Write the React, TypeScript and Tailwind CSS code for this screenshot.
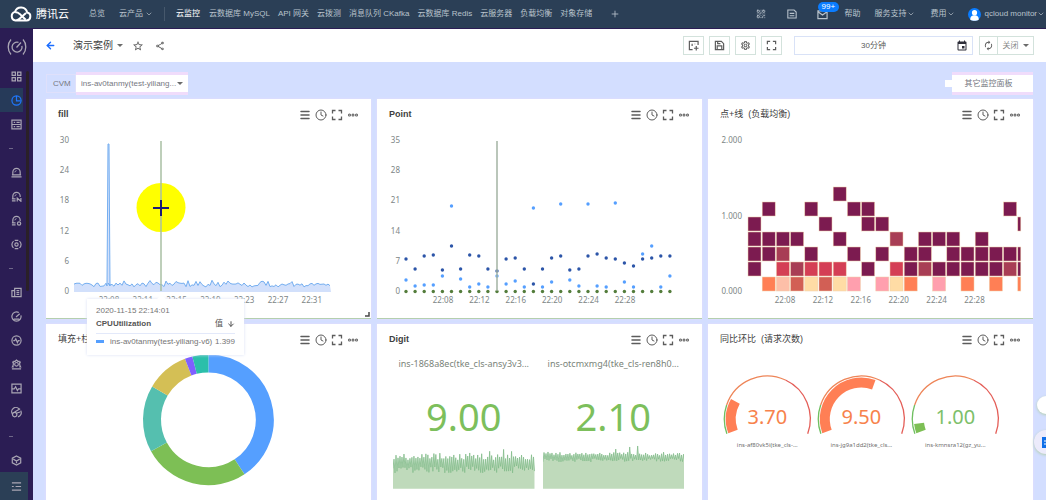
import type { ReactNode } from "react";
import { ArrowDown, ArrowLeft, ChevronDown, Clock, Ellipsis, Menu, Plus, QrCode } from "lucide-react";
import { MdAutorenew, MdEvent, MdOutlineSettings, MdOutlineShare, MdStarOutline } from "react-icons/md";

const AXIS = "fill-[#7d8686] text-[8px] font-['Noto_Sans',sans-serif]";

const NAV = [
  "云数据库 MySQL",
  "API 网关",
  "云拨测",
  "消息队列 CKafka",
  "云数据库 Redis",
  "云服务器",
  "负载均衡",
  "对象存储",
];

/* ---------- helpers ---------- */

function noise(i: number) {
  const v = Math.sin(i * 12.9898 + 4.1) * 43758.5453;
  return v - Math.floor(v);
}

function polar(cx: number, cy: number, r: number, deg: number) {
  const a = ((deg - 90) * Math.PI) / 180;
  return `${(cx + r * Math.cos(a)).toFixed(2)} ${(cy + r * Math.sin(a)).toFixed(2)}`;
}

function arc(cx: number, cy: number, r: number, from: number, to: number) {
  const large = to - from > 180 ? 1 : 0;
  return `M${polar(cx, cy, r, from)}A${r} ${r} 0 ${large} 1 ${polar(cx, cy, r, to)}`;
}

function Glyph({ children, className = "size-[11px]" }: { children: ReactNode; className?: string }) {
  return (
    <svg viewBox="0 0 12 12" className={className} fill="none" stroke="currentColor" strokeWidth="1.300">
      {children}
    </svg>
  );
}

function Expand({ className }: { className: string }) {
  return (
    <Glyph className={className}>
      <path d="M1.500 4.500v-3h3M7.500 1.500h3v3M10.500 7.500v3h-3M4.500 10.500h-3v-3" />
    </Glyph>
  );
}

/* ---------- header ---------- */

function CloudLogo() {
  return (
    <svg viewBox="0 0 22 16" className="h-4 w-[22px]" fill="none" stroke="white" strokeWidth="2" strokeLinejoin="round">
      <path d="M6 14.500h10.500a4 4 0 0 0 .7-7.900A6.300 6.300 0 0 0 5 5.900a4.400 4.400 0 0 0 .5 8.600c1.600 0 2.700-.5 4-1.700L16 7" />
      <path d="M5.200 6.300c1.800-.2 3.200.5 4.500 1.600l6 5.900" />
    </svg>
  );
}

function Header() {
  return (
    <header className="flex h-[29px] shrink-0 items-center border-b border-[#2b1d54] bg-[#2b3f56] text-[8px] whitespace-nowrap text-[#b9c3cc]">
      <a href="#" className="ml-[10px] flex items-center gap-1 text-[11px] text-white">
        <CloudLogo />
        腾讯云
      </a>
      <nav className="ml-5 flex items-center">
        <a href="#">总览</a>
        <button className="ml-[14px] flex items-center">
          云产品
          <ChevronDown className="ml-[2px] size-2" />
        </button>
        <span className="mx-[11px] h-[14px] w-px bg-[#46586c]" />
        <div className="flex items-center gap-2">
          <a href="#" className="pr-px text-white">云监控</a>
          {NAV.map((item) => (
            <a href="#" key={item}>{item}</a>
          ))}
        </div>
        <button aria-label="添加" className="ml-[18px]">
          <Plus className="size-[10px]" />
        </button>
      </nav>
      <div className="mr-px ml-auto flex items-center">
        <button aria-label="二维码"><QrCode className="size-[10px]" /></button>
        <button aria-label="文档" className="ml-[21px]">
          <Glyph className="size-[10px]">
            <path d="M1 1.200h7.500l2.500 2.500v7.100H1zM3.200 5.200h5.600M3.200 8h5.600" />
          </Glyph>
        </button>
        <button aria-label="消息" className="relative ml-5">
          <Glyph>
            <path d="M1 2h10v8.500H1zM1 3l5 3.500L11 3" />
          </Glyph>
          <span className="absolute -top-[7px] left-px rounded-full bg-[#0a7cff] px-1 text-[8px] leading-[10px] text-white">99+</span>
        </button>
        <a href="#" className="ml-[17px]">帮助</a>
        <button className="ml-[14px] flex items-center">服务支持<ChevronDown className="size-2" /></button>
        <button className="ml-4 flex items-center">费用<ChevronDown className="size-2" /></button>
        <button className="ml-[13px] flex items-center">
          <svg viewBox="0 0 12 12" className="mr-1 size-[13px]">
            <circle cx="6" cy="6" r="6" fill="#0a7cff" />
            <circle cx="6" cy="4.300" r="2.400" fill="white" />
            <path d="M2 10.500c.2-2.600 1.500-3.700 4-3.700s3.800 1.100 4 3.700c-2 1.800-6 1.800-8 0z" fill="white" />
          </svg>
          qcloud monitor
          <ChevronDown className="size-2" />
        </button>
      </div>
    </header>
  );
}

/* ---------- sidebar ---------- */

function AlarmIcon({ mark }: { mark?: ReactNode }) {
  return (
    <Glyph>
      <path d={mark ? "M1 10.800h4M1 8.600h4M2 8.500V5.500a4 4 0 0 1 8 0v1" : "M.5 10.800h11M2 8.500V5.500a4 4 0 0 1 8 0v3M1 8.600h10"} />
      <path d="M4.200 5.800A2 2 0 0 1 6 4" strokeWidth="1" />
      {mark}
    </Glyph>
  );
}

const SIDE: { label: string; icon: ReactNode }[] = [
  {
    label: "监控概览",
    icon: (
      <Glyph>
        <path d="M1.200 1.200h3.600v3.600H1.200zM7.200 1.200h3.600v3.600H7.200zM1.200 7.200h3.600v3.600H1.200zM7.200 7.200h3.600v3.600H7.200z" />
      </Glyph>
    ),
  },
  {
    label: "Dashboard",
    icon: (
      <Glyph>
        <circle cx="6" cy="6" r="5" />
        <path d="M6 1v5.500h4.500" />
      </Glyph>
    ),
  },
  {
    label: "实例分组",
    icon: (
      <Glyph>
        <path d="M1 1.200h10v9.600H1zM1 6h10M3 3.600h1.500M6 3.600h3.500M3 8.400h1.500M6 8.400h3.500" />
      </Glyph>
    ),
  },
  { label: "", icon: null },
  { label: "告警历史", icon: <AlarmIcon /> },
  { label: "告警通知", icon: <AlarmIcon mark={<path d="M6.800 11.500V7.800l4 3.400V7.500" />} /> },
  { label: "告警配置", icon: <AlarmIcon mark={<circle cx="8.800" cy="9.300" r="1.800" />} /> },
  {
    label: "事件中心",
    icon: (
      <Glyph>
        <circle cx="6" cy="6" r="1.800" />
        <path d="M4 1.500h4M4 10.500h4M2.800 2.300A5 5 0 0 0 1 6a5 5 0 0 0 1.800 3.700M9.200 2.300A5 5 0 0 1 11 6a5 5 0 0 1-1.800 3.700" />
      </Glyph>
    ),
  },
  { label: "", icon: null },
  {
    label: "云产品监控",
    icon: (
      <Glyph>
        <path d="M4 1.500h7v9H4zM4 4H1v6.500h3M6 4h3M6 6h3M6 8h3" />
      </Glyph>
    ),
  },
  {
    label: "流量监控",
    icon: (
      <Glyph>
        <path d="M8.500 1.700a5 5 0 1 0 2.300 3M5.500 6.500l4-3.500M3 8.800h6" />
      </Glyph>
    ),
  },
  {
    label: "应用监控",
    icon: (
      <Glyph>
        <circle cx="6" cy="6" r="5" />
        <path d="M2.500 6.200h1.500l1.200-2 1.800 4 1-2h1.500" />
      </Glyph>
    ),
  },
  {
    label: "告警服务",
    icon: (
      <Glyph>
        <path d="M1 10.800h10M3 8.500H1.500L2.500 6.500v-3H1.200M9 8.500h1.500l-1-2v-3h1.300M2.500 2.500h2L6 1.200l1.500 1.300h2" />
        <circle cx="6" cy="5.800" r="2" />
      </Glyph>
    ),
  },
  {
    label: "自定义监控",
    icon: (
      <Glyph>
        <path d="M1 1.200h10v9.600H1zM1 6.500h2.500L5 4l2 4.200 1.200-1.700H11" />
      </Glyph>
    ),
  },
  {
    label: "前端监控",
    icon: (
      <Glyph>
        <path d="M1.500 7.500A4.500 4.500 0 0 1 9 2.500M4 5.500l6-3.500M10.500 4a4.500 4.500 0 0 1-3 6.800" />
        <circle cx="4" cy="8.300" r="2.400" />
        <path d="M6.500 6.500l3.500-1" />
      </Glyph>
    ),
  },
  { label: "", icon: null },
  {
    label: "资源包",
    icon: (
      <Glyph>
        <path d="M6 1l4.600 2.400v5.200L6 11 1.400 8.600V3.400zM2.500 4.500L6 6.500l3.500-2M6 6.500V9" />
      </Glyph>
    ),
  },
];

function Sidebar() {
  return (
    <aside className="relative flex w-[33px] shrink-0 flex-col bg-[#2b1d54] text-[#aaa6b4]">
      <div className="flex h-[35px] items-center justify-center">
        <svg viewBox="0 0 20 18" className="h-[18px] w-5" fill="none" stroke="currentColor" strokeWidth="1.300">
          <path d="M4 1.500C.3 5.500.3 12.500 4 16.500M16 1.500c3.700 4 3.700 11 0 15" />
          <path d="M11.500 4.300a5 5 0 1 0 3.400 3.500M9.500 9.500l4.500-5" />
        </svg>
      </div>
      {SIDE.map((item, i) =>
        item.icon ? (
          <button
            key={i}
            aria-label={item.label}
            className={`flex h-6 items-center pl-[11px] ${i === 1 ? "w-[23px] bg-[#263a59] text-[#1f78ff]" : "w-full"}`}
          >
            <span className="shrink-0">{item.icon}</span>
          </button>
        ) : (
          <div key={i} className="flex h-6 items-center pl-[9px]">
            <span className="h-px w-1 bg-[#6f6889]" />
          </div>
        )
      )}
      <span className="absolute top-[42px] left-[26px] h-[220px] w-[3px] rounded-full bg-[#2a2028]" />
      <button aria-label="收起" className="mt-auto flex h-7 w-[28px] items-center bg-[#2b3f56] pl-[11px]">
        <Glyph>
          <path d="M1 2h10M5 6h6M1 10h10M1 6h2" />
        </Glyph>
      </button>
    </aside>
  );
}

/* ---------- toolbar ---------- */

function ToolButton({ label, children }: { label: string; children: ReactNode }) {
  return (
    <button aria-label={label} className="flex h-[19px] w-[21px] items-center justify-center border border-[#d3e2dc]">
      {children}
    </button>
  );
}

function Caret() {
  return <span className="border-x-[3px] border-t-[3px] border-x-transparent border-t-[#6b6b6b]" />;
}

function Toolbar() {
  return (
    <div className="flex h-[33px] shrink-0 items-center bg-white px-3 text-[#5c5c5c]">
      <button aria-label="返回"><ArrowLeft className="size-[11px] text-[#1a6dff]" strokeWidth={3} /></button>
      <button className="ml-[17px] flex items-center gap-1 text-[10px] text-[#3f3f3f]">
        演示案例
        <Caret />
      </button>
      <button aria-label="收藏" className="ml-[9px]"><MdStarOutline className="size-3" /></button>
      <button aria-label="分享" className="ml-[11px]"><MdOutlineShare className="size-[10px]" /></button>
      <div className="ml-auto flex items-center gap-[5px]">
        <ToolButton label="新建图表">
          <Glyph>
            <path d="M11 5.500v-4H1.500v9H5M4.500 4v2.500M7.500 4v.5M9 6.500v5M6.500 9h5" />
          </Glyph>
        </ToolButton>
        <ToolButton label="保存">
          <Glyph>
            <path d="M1.500 1.500h6.500l2.500 2.500v6.500h-9zM4 1.500V4h3M3.500 10.500v-4h5v4" />
          </Glyph>
        </ToolButton>
        <ToolButton label="设置"><MdOutlineSettings className="size-[11px]" /></ToolButton>
        <ToolButton label="全屏"><Expand className="size-[11px]" /></ToolButton>
      </div>
      <button className="ml-3 flex h-[19px] w-[179px] items-center border border-[#d9e2f7] pr-1 text-[8px]">
        <span className="flex-1 pr-1">30分钟</span>
        <MdEvent className="size-3 text-[#2f2f3a]" />
      </button>
      <div className="ml-[6px] flex h-[19px] items-stretch border border-[#d3e2dc] text-[8px] text-[#8a8a8a]">
        <button aria-label="刷新" className="flex w-[18px] items-center justify-center border-r border-[#d3e2dc]">
          <MdAutorenew className="size-[11px] text-[#5c5c5c]" />
        </button>
        <button className="flex w-[35px] items-center justify-center gap-1">
          关闭
          <Caret />
        </button>
      </div>
    </div>
  );
}

function FilterBar() {
  return (
    <div className="flex h-[23px] items-center text-[8px] text-[#76787f]">
      <label htmlFor="cvm" className="flex h-[19px] w-[30px] items-center border border-[#dfe0fb] pl-[6px]">CVM</label>
      <div className="relative flex h-[23px] items-center border-y-[3px] border-[#f0dcfb] bg-white">
        <select id="cvm" className="h-[17px] w-[112px] appearance-none bg-white pl-[5px] outline-none">
          <option>ins-av0tanmy(test-yiliang...</option>
        </select>
        <span className="pointer-events-none absolute right-[5px] flex"><Caret /></span>
      </div>
      <span className="ml-auto size-[7px] bg-white" />
      <button className="h-[23px] w-[81px] border-y-[3px] border-[#f0dcfb] bg-white pr-2">其它监控面板</button>
    </div>
  );
}

/* ---------- cards ---------- */

function Card({ title, bold, children }: { title: string; bold?: boolean; children: ReactNode }) {
  return (
    <section className="relative border-b border-[#b4cfae] bg-white shadow-[0_0_2px_#e9defb]">
      <div className="flex h-[29px] items-center pt-[2px] pr-3 pl-3">
        <h2 className={`text-[9px] whitespace-pre text-[#3f3f3f] ${bold ? "font-bold" : "font-normal"}`}>{title}</h2>
        <div className="ml-auto flex items-center gap-1 text-[#5c5c5c]">
          <button aria-label="图例"><Menu className="size-3" strokeWidth={3} /></button>
          <button aria-label="时间"><Clock className="size-3" strokeWidth={2} /></button>
          <button aria-label="全屏"><Expand className="size-3" /></button>
          <button aria-label="更多"><Ellipsis className="size-3" strokeWidth={4} /></button>
        </div>
      </div>
      {children}
    </section>
  );
}

function YAxis({ labels, x, step }: { labels: string[]; x: number; step: number }) {
  return (
    <>
      {labels.map((label, i) => (
        <text key={label} x={x} y={15 + i * step} textAnchor="end" className={AXIS}>{label}</text>
      ))}
    </>
  );
}

function XAxis({ labels, x, step }: { labels: string[]; x: number; step: number }) {
  return (
    <>
      {labels.map((label, i) => (
        <text key={label} x={x + i * step} y="175" textAnchor="middle" className={AXIS}>{label}</text>
      ))}
    </>
  );
}

function FillChart() {
  const pts: string[] = [];
  for (let i = 0; i <= 128; i++) {
    const peak = noise(i) > 0.78 ? 3 : 0;
    pts.push(`${28 + i * 2},${(159 - noise(i + 40) * 4 - peak).toFixed(1)}`);
    if (i === 16) pts.push("61,158", "62,16", "63,16", "64,158");
  }
  const line = pts.join(" ");
  return (
    <svg viewBox="0 0 325 190" className="block w-full">
      <YAxis labels={["30", "24", "18", "12", "6", "0"]} x={23} step={30.2} />
      <XAxis labels={["22:08", "22:11", "22:15", "22:19", "22:23", "22:27", "22:31"]} x={63} step={33.800} />
      <polygon points={`28,164 ${line} 285,164`} fill="#d2e0fb" />
      <polyline points={line} fill="none" stroke="#74aef0" strokeWidth="1" />
      <circle cx="115" cy="79.500" r="24.500" fill="#ffff00" />
      <path d="M115 13v150" stroke="#a9bfa3" strokeWidth="1.500" />
      <path d="M107 80h16M115 72v16" stroke="#1c1c78" strokeWidth="2" />
      <path d="M319 188h4v-4" fill="none" stroke="#4a4a4a" strokeWidth="1.500" />
    </svg>
  );
}

function SeriesTooltip() {
  return (
    <div className="absolute top-[200px] left-[41px] z-10 w-[157px] bg-white px-[9px] pt-[6px] pb-[5px] text-[8px] text-[#757575] shadow-[0_0_3px_#d9e0f4]">
      <span className="absolute -top-[3px] left-[71px] size-[7px] rotate-45 bg-white" />
      <p className="leading-[11px]">2020-11-15 22:14:01</p>
      <table className="w-full">
        <thead>
          <tr className="h-[17px] border-b border-[#e3e9fa] text-left text-[#555]">
            <th colSpan={2} className="font-bold">CPUUtilization</th>
            <th className="w-[18px] font-normal">
              <span className="flex items-center gap-1">值<ArrowDown className="size-2" strokeWidth={3} /></span>
            </th>
          </tr>
        </thead>
        <tbody>
          <tr className="h-[17px]">
            <td className="w-[14px]"><span className="block h-[3px] w-2 bg-[#559fff]" /></td>
            <td className="whitespace-nowrap">ins-av0tanmy(test-yiliang-v6)</td>
            <td>1.399</td>
          </tr>
        </tbody>
      </table>
    </div>
  );
}

const DARK = [131, 141, 128, 127, 142, 118, 141, 127, 128, 141, 143, 131, 130, 141, 156, 141, 130, 128, 142, 141, 128, 126, 130, 131, 135, 138, 131, 130, 128, 128];
const LIGHT = [152, 158, 157, 157, 148, 78, 151, 159, 156, 159, 148, 156, 153, 159, 80, 159, 154, 76, 152, 158, 76, 158, 159, 75, 154, 159, 126, 118, 159, 148];

function PointChart() {
  return (
    <svg viewBox="0 0 325 190" className="block w-full">
      <YAxis labels={["35", "28", "21", "14", "7", "0"]} x={23} step={30.2} />
      <XAxis labels={["22:08", "22:12", "22:16", "22:20", "22:24", "22:28"]} x={66} step={36.4} />
      {LIGHT.map((y, i) => (
        <circle key={i} cx={29 + i * 9.1} cy={y} r="1.700" fill="#559fff" />
      ))}
      {DARK.map((y, i) => (
        <circle key={i} cx={29 + i * 9.1} cy={y} r="1.700" fill="#2c55a8" />
      ))}
      {DARK.map((_, i) => (
        <circle key={i} cx={29 + i * 9.1} cy="163.500" r="1.700" fill="#547d3c" />
      ))}
      <path d="M120 13v150" stroke="#a3b3a3" strokeWidth="1.500" />
    </svg>
  );
}

const HEAT = [
  "......P.............",
  ".P..P..PP.........P.",
  "P....P..PP.........P",
  "PPPP..P...R.PPP.P...",
  "PPR.P..P.P.PP.PPPPPP",
  "P.CRCCC.P.CPRPPPPPRP",
  ".OLTYTYK.KYO.K.O.O.O",
];

const HEAT_COLORS: Record<string, string> = {
  P: "#7c1b50",
  R: "#a83e55",
  C: "#d43f55",
  O: "#ff7f55",
  L: "#fdbfa8",
  T: "#d25f55",
  Y: "#ffdca5",
  K: "#ff9fae",
};

function HeatChart() {
  return (
    <svg viewBox="0 0 325 190" className="block w-full">
      <YAxis labels={["2.000", "1.000", "0.000"]} x={34} step={75.5} />
      <XAxis labels={["22:08", "22:12", "22:16", "22:20", "22:24", "22:28"]} x={77} step={37.9} />
      {HEAT.flatMap((row, r) =>
        row.split("").map((c, i) =>
          c === "." ? null : (
            <rect
              key={`${r}-${i}`}
              x={40 + i * 14.2}
              y={59 + r * 15}
              width={i === 19 ? 3 : 13}
              height="14"
              fill={HEAT_COLORS[c]}
              stroke="#f0cfa8"
              strokeWidth="0.500"
            />
          )
        )
      )}
    </svg>
  );
}

const SLICES = [
  { from: 0, to: 146.5, color: "#559fff" },
  { from: 146.5, to: 241.3, color: "#7dbf55" },
  { from: 241.3, to: 300.7, color: "#55bfaf" },
  { from: 300.7, to: 339, color: "#d4bf55" },
  { from: 339, to: 345.8, color: "#7f5fff" },
  { from: 345.8, to: 360, color: "#2bbfaa" },
];

function DonutChart() {
  return (
    <svg viewBox="0 0 325 190" className="block w-full">
      {SLICES.map((s) => (
        <path key={s.color} d={arc(162.4, 66.8, 56.4, s.from, s.to)} fill="none" stroke={s.color} strokeWidth="18" />
      ))}
    </svg>
  );
}

function DigitPanel({ name, value, base, amp, seed }: { name: string; value: string; base: number; amp: number; seed: number }) {
  const pts = Array.from({ length: 143 }, (_, i) => {
    const spike = i % 2 && noise(i * 3 + seed) > 0.9 ? 6 : 0;
    const swing = (i % 2 ? -1 : 1) * amp * (0.3 + noise(i + seed) * 0.7);
    return `${i},${(base + swing - spike).toFixed(1)}`;
  }).join(" ");
  return (
    <div className="min-w-0 flex-1 text-center font-['Noto_Sans',sans-serif]">
      <p className="text-[9px] leading-[22px] whitespace-nowrap text-[#7a847a]">{name}</p>
      <p className="pt-[15px] text-[38px] leading-[53px] text-[#7dbf5c]">{value}</p>
      <svg viewBox="0 0 142 46" className="block w-full">
        <polygon points={`0,46 ${pts} 142,46`} fill="#bfdabb" />
        <polyline points={pts} fill="none" stroke="#84bd8c" strokeWidth="0.800" />
      </svg>
    </div>
  );
}

const GAUGES = [
  { cx: 59.3, value: "3.70", end: -61, color: "#ff7f55", text: "fill-[#f7824c]", name: "ins-af80vk5i(tke_cls-..." },
  { cx: 153.3, value: "9.50", end: 20, color: "#ff7f55", text: "fill-[#f7824c]", name: "ins-jg9a1dd2(tke_cls..." },
  { cx: 247.3, value: "1.00", end: -97, color: "#7dbf55", text: "fill-[#7dbf6a]", name: "ins-kmnsra12(gz_yu..." },
];

function GaugeChart() {
  return (
    <svg viewBox="0 0 325 190" className="block w-full">
      {GAUGES.map((g) => (
        <g key={g.value} fill="none" strokeWidth="1.300">
          <path d={arc(g.cx, 66, 43, -110, -71)} stroke="#6fbf60" />
          <path d={arc(g.cx, 66, 43, -71, 25)} stroke="#ee8558" />
          <path d={arc(g.cx, 66, 43, 25, 110)} stroke="#e45e58" />
          <path d={arc(g.cx, 66, 36.5, -110, g.end)} stroke={g.color} strokeWidth="10" />
          <text x={g.cx} y="71" textAnchor="middle" className={`text-[20px] font-['Noto_Sans',sans-serif] ${g.text}`}>{g.value}</text>
          <text x={g.cx} y="94" textAnchor="middle" className="fill-[#6f6f6f] text-[6px] font-['Noto_Sans',sans-serif]">{g.name}</text>
        </g>
      ))}
    </svg>
  );
}

export default function App() {
  return (
    <div className="flex h-screen flex-col overflow-hidden bg-[#d3deff] font-['Liberation_Sans','Noto_Sans_CJK_SC',sans-serif]">
      <Header />
      <div className="flex min-h-0 flex-1">
        <Sidebar />
        <div className="flex min-w-0 flex-1 flex-col">
          <Toolbar />
          <main className="min-h-0 flex-1 overflow-hidden px-[13px] pt-[10px]">
            <FilterBar />
            <div className="mt-1 grid grid-cols-3 gap-x-[6px] gap-y-[5px]">
              <Card title="fill" bold>
                <FillChart />
                <SeriesTooltip />
              </Card>
              <Card title="Point" bold><PointChart /></Card>
              <Card title="点+线  (负载均衡)"><HeatChart /></Card>
              <Card title="填充+柱状"><DonutChart /></Card>
              <Card title="Digit" bold>
                <div className="flex gap-2 pr-[18px] pl-4">
                  <DigitPanel name="ins-1868a8ec(tke_cls-ansy3v3..." value="9.00" base={20} amp={10} seed={5} />
                  <DigitPanel name="ins-otcmxmg4(tke_cls-ren8h0..." value="2.10" base={14} amp={5} seed={77} />
                </div>
              </Card>
              <Card title="同比环比  (请求次数)"><GaugeChart /></Card>
            </div>
          </main>
        </div>
      </div>
      {/* floating help widgets */}
      <div className="fixed top-[396px] -right-3 flex flex-col items-center gap-4">
        <button aria-label="反馈" className="size-[18px] rounded-full bg-white shadow-[0_1px_3px_#b4cfae]" />
        <button aria-label="客服" className="flex size-6 items-center rounded-full bg-[#ecebfb] pl-2 shadow-[0_1px_3px_#b4cfae]">
          <svg viewBox="0 0 10 11" className="h-[11px] w-[10px]">
            <path d="M0 0h10v11H0z" fill="#0f6fe8" />
            <path d="M2 4h6M2 7h6" stroke="white" />
          </svg>
        </button>
      </div>
    </div>
  );
}
